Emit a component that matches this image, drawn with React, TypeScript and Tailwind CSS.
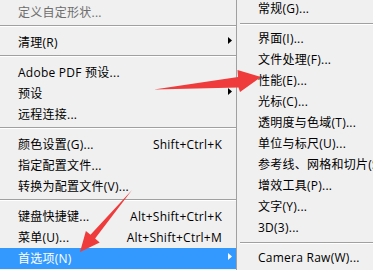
import React from "react";

type Item =
  | { sep: true }
  | { label: string; shortcut?: string; sub?: boolean; disabled?: boolean; active?: boolean };

const leftItems: Item[] = [
  { label: "定义自定形状...", disabled: true },
  { sep: true },
  { label: "清理(R)", sub: true },
  { sep: true },
  { label: "Adobe PDF 预设..." },
  { label: "预设", sub: true },
  { label: "远程连接..." },
  { sep: true },
  { label: "颜色设置(G)...", shortcut: "Shift+Ctrl+K" },
  { label: "指定配置文件..." },
  { label: "转换为配置文件(V)..." },
  { sep: true },
  { label: "键盘快捷键...", shortcut: "Alt+Shift+Ctrl+K" },
  { label: "菜单(U)...", shortcut: "Alt+Shift+Ctrl+M" },
  { label: "首选项(N)", sub: true, active: true },
];

const rightItems: Item[] = [
  { label: "常规(G)..." },
  { sep: true },
  { label: "界面(I)..." },
  { label: "文件处理(F)..." },
  { label: "性能(E)..." },
  { label: "光标(C)..." },
  { label: "透明度与色域(T)..." },
  { label: "单位与标尺(U)..." },
  { label: "参考线、网格和切片(S)..." },
  { label: "增效工具(P)..." },
  { label: "文字(Y)..." },
  { label: "3D(3)..." },
  { sep: true },
  { label: "Camera Raw(W)..." },
];

function SubArrow({ white }: { white?: boolean }) {
  return (
    <svg width="4" height="7" viewBox="0 0 4 7" className="mb-[5px] ml-[6px]">
      <polygon points="0,0 4,3.5 0,7" fill={white ? "#ffffff" : "#000000"} />
    </svg>
  );
}

function Separator({ offset }: { offset: "left" | "right" }) {
  return (
    <div className={offset === "left" ? "h-[9px] shrink-0 pt-[2px]" : "h-[9px] shrink-0 pt-[4px] pl-[3px]"}>
      <div className="border-t border-b border-t-[#a0a0a0] border-b-white" />
    </div>
  );
}

export default function App() {
  return (
    <div
      className="relative flex w-[373px] h-[270px] overflow-hidden bg-[#f0f0f0] text-[12px] tracking-[0.25px] text-black"
      style={{ fontFamily: '"Open Sans", "Noto Sans CJK SC", sans-serif' }}
    >
      {/* left menu */}
      <div className="w-[236px] shrink-0 pt-[2px] flex flex-col">
        {leftItems.map((it, i) =>
          "sep" in it ? (
            <Separator key={i} offset="left" />
          ) : (
            <div
              key={i}
              className={`h-[21px] shrink-0 flex items-center pl-[18px] whitespace-nowrap leading-none ${
                it.active ? "bg-[#3399ff] text-white" : it.disabled ? "text-[#6d6d6d]" : ""
              }`}
            >
              <span className="flex-1">{it.label}</span>
              {it.shortcut && <span>{it.shortcut}</span>}
              <div className="w-[14px] flex items-center">{it.sub && <SubArrow white={it.active} />}</div>
            </div>
          )
        )}
      </div>

      <div className="w-px shrink-0 bg-[#a0a0a0]" />

      {/* preferences submenu */}
      <div className="flex-1 min-w-0 overflow-hidden -mt-[2px] flex flex-col">
        {rightItems.map((it, i) =>
          "sep" in it ? (
            <Separator key={i} offset="right" />
          ) : (
            <div key={i} className="h-[21px] shrink-0 flex items-center pl-[21px] whitespace-nowrap leading-none">
              {it.label}
            </div>
          )
        )}
      </div>

      {/* red annotation arrows */}
      <svg className="absolute inset-0 pointer-events-none" width="373" height="270" viewBox="0 0 373 270">
        <polygon points="154,89.5 238,77 237.5,70 261,77 240,92 238.5,87.5" fill="#ef3b3b" />
        <polygon points="132,190 95.1,238.6 99.7,242.5 80,252 85.9,230.9 90.5,234.8" fill="#ef3b3b" />
      </svg>
    </div>
  );
}
